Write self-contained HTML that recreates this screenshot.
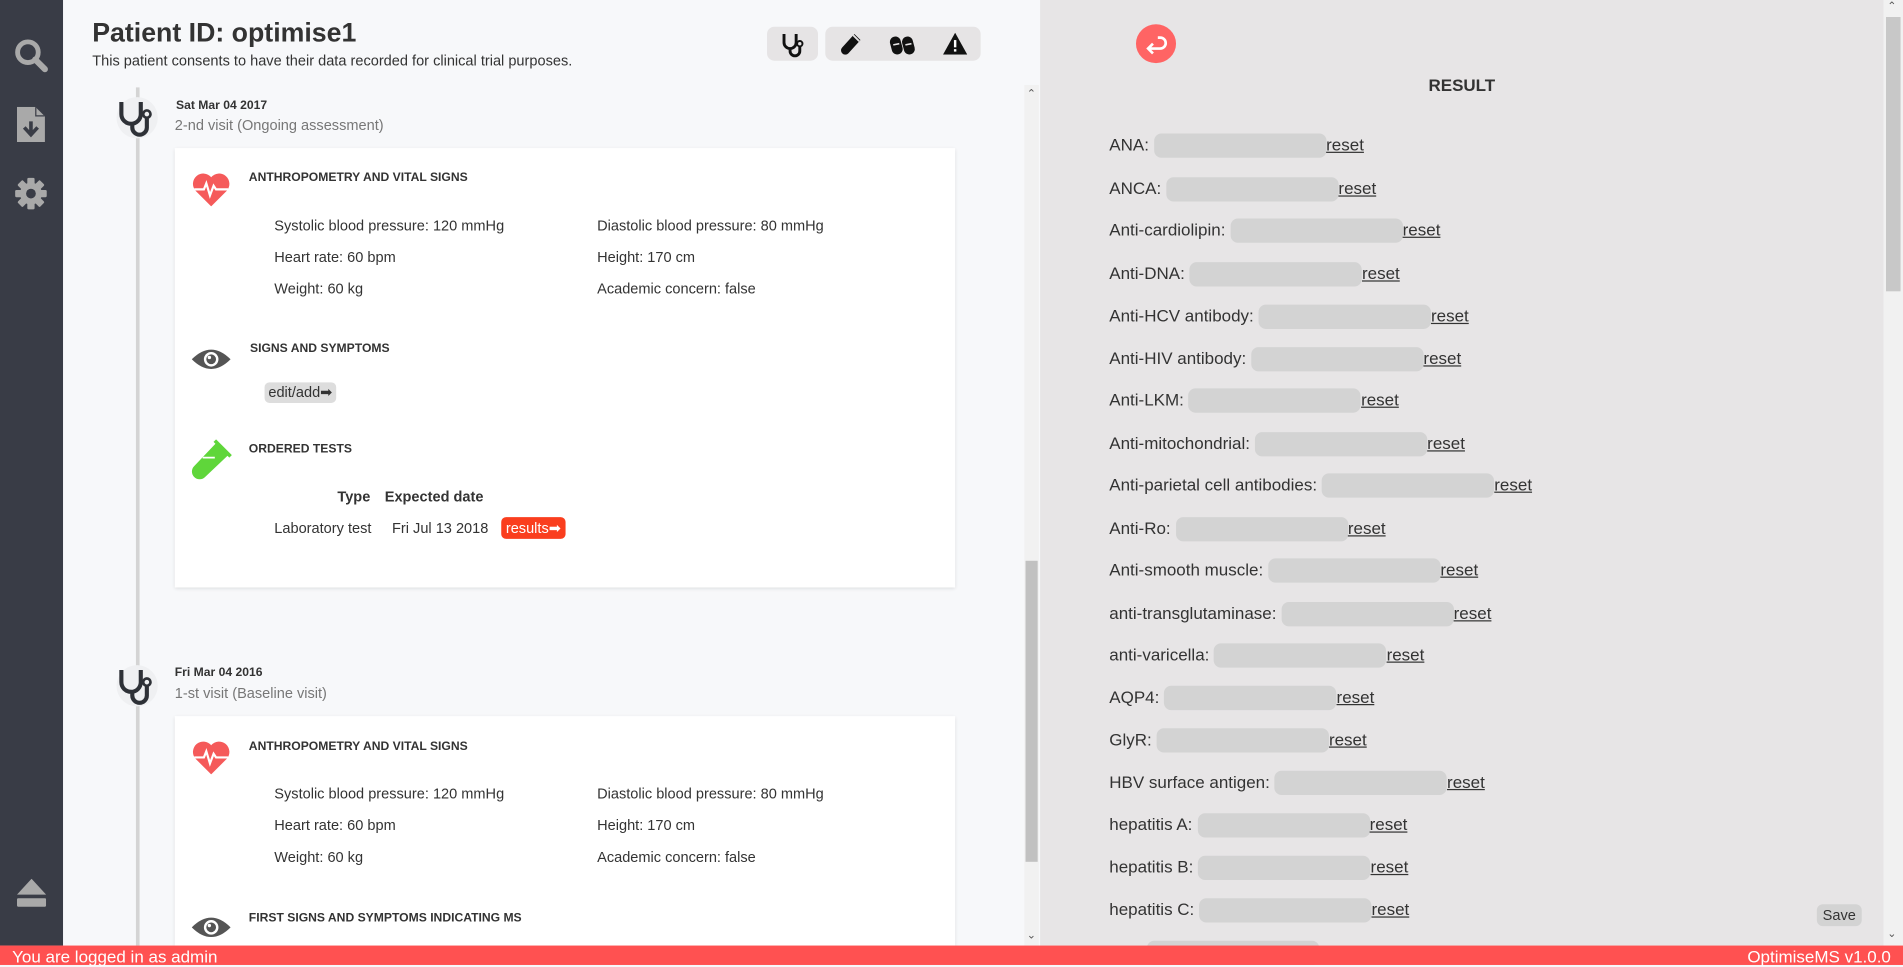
<!DOCTYPE html>
<html><head><meta charset="utf-8"><style>
html,body{margin:0;padding:0;width:1903px;height:965px;overflow:hidden;background:#f7f8fa;}
#w{position:absolute;left:0;top:0;width:1568px;height:795px;transform:scale(1.21365,1.2138);transform-origin:0 0;font-family:"Liberation Sans",Arial,sans-serif;color:#333;}
.abs{position:absolute;}
#side{left:0;top:0;width:52px;height:779px;background:#393c46;}
#left{left:52px;top:0;width:805px;height:779px;background:#f7f8fa;}
#right{left:857px;top:0;width:695px;height:779px;background:#e7e5e6;}
#bar{left:0;top:779px;width:1568px;height:16px;background:#ff5151;color:#fff;font-size:14px;line-height:18px;}
.card{background:#fff;box-shadow:0 1px 3px rgba(0,0,0,.12);}
.h{font-size:10px;font-weight:bold;color:#333;}
.t{font-size:12px;color:#333;}
.btn{background:#e6e4e5;border-radius:6px;}
.item{position:absolute;left:914px;font-size:14px;color:#333;height:20px;line-height:20px;white-space:nowrap;}
.item i{display:inline-block;width:142px;height:20px;background:#d3d3d3;border-radius:6px;vertical-align:middle;margin-left:4px;}
.item u{color:#333;}
</style></head><body><div id="w">
<div id="side" class="abs">
 <svg class="abs" style="left:10px;top:30px" width="32" height="32" viewBox="0 0 32 32"><circle cx="13" cy="13" r="8.5" fill="none" stroke="#a9a9a9" stroke-width="4"/><path d="M19 19 L27 27" stroke="#a9a9a9" stroke-width="5" stroke-linecap="round"/></svg>
 <svg class="abs" style="left:14px;top:88px" width="24" height="30" viewBox="0 0 24 30"><path d="M0 0 H15 L23 8 V29 H0 Z" fill="#a9a9a9"/><path d="M15 0 V8 H23" fill="#393c46"/><path d="M16 1 L22 7 H16Z" fill="#a9a9a9"/><path d="M11.5 12 V22 M6 17 L11.5 23 L17 17" stroke="#393c46" stroke-width="3" fill="none"/></svg>
 <svg class="abs" style="left:12px;top:146px" width="27" height="27" viewBox="-13.5 -13.5 27 27"><g fill="#a9a9a9"><circle r="9"/><g id="tt"><rect x="-3" y="-13" width="6" height="6" rx="1"/></g><use href="#tt" transform="rotate(45)"/><use href="#tt" transform="rotate(90)"/><use href="#tt" transform="rotate(135)"/><use href="#tt" transform="rotate(180)"/><use href="#tt" transform="rotate(225)"/><use href="#tt" transform="rotate(270)"/><use href="#tt" transform="rotate(315)"/></g><circle r="4" fill="#393c46"/></svg>
 <svg class="abs" style="left:14px;top:724px" width="24" height="28" viewBox="0 0 24 28"><path d="M12 0 L24 13 H0 Z" fill="#a9a9a9"/><rect x="0" y="16" width="24" height="7" rx="1" fill="#a9a9a9"/></svg>
</div>
<div id="left" class="abs"></div>
<div class="abs" style="left:76px;top:14px;font-size:22px;font-weight:bold;color:#333">Patient ID: optimise1</div>
<div class="abs t" style="left:76px;top:43px;font-size:12px">This patient consents to have their data recorded for clinical trial purposes.</div>
<div class="abs btn" style="left:632px;top:22px;width:42px;height:28px"></div>
<div class="abs btn" style="left:680px;top:22px;width:128px;height:28px"></div>
<svg class="abs" style="left:643px;top:26px" width="20" height="22" viewBox="0 0 20 22"><path d="M3 2 V9 A5 5 0 0 0 13 9 V2 M8 14 V16 A4 4 0 0 0 16 16 V12" fill="none" stroke="#111" stroke-width="2.4"/><circle cx="16" cy="10" r="2.2" fill="none" stroke="#111" stroke-width="1.6"/></svg>
<svg class="abs" style="left:692px;top:27px" width="18" height="20" viewBox="0 0 18 20"><path d="M12 1 L17 6 L7 17 A3.2 3.2 0 0 1 2 12 Z" fill="#111"/><path d="M11 2 L16 7" stroke="#e6e4e5" stroke-width="1.5"/></svg>
<svg class="abs" style="left:733px;top:28px" width="22" height="18" viewBox="0 0 22 18"><g fill="#111"><rect x="1" y="2" width="9" height="15" rx="4.5" transform="rotate(-15 5.5 9.5)"/><rect x="11" y="2" width="9" height="15" rx="4.5" transform="rotate(-15 15.5 9.5)"/></g><path d="M3 9 L8 8 M13 9 L18 8" stroke="#e6e4e5" stroke-width="1.3"/></svg>
<svg class="abs" style="left:777px;top:27px" width="20" height="18" viewBox="0 0 20 18"><path d="M10 0 L20 18 H0 Z" fill="#111"/><rect x="9" y="6" width="2" height="6" fill="#fff"/><rect x="9" y="13.5" width="2" height="2" fill="#fff"/></svg>
<!-- timeline -->
<div class="abs" style="left:112px;top:72px;width:3px;height:707px;background:#d4d4d4"></div>
<div class="abs" style="left:844px;top:70px;width:12px;height:709px;background:#f1f1f1"></div>
<div class="abs" style="left:845px;top:462px;width:10px;height:248px;background:#c1c1c1"></div>
<div class="abs" style="left:846px;top:72px;font-size:9px;color:#555">&#8963;</div>
<div class="abs" style="left:846px;top:765px;font-size:9px;color:#555">&#8964;</div>
<!-- visit 1 -->
<div class="abs" style="left:96px;top:80px;width:34px;height:34px;border-radius:50%;background:#eff0f2"></div>
<svg class="abs" style="left:97px;top:82px" width="30" height="32" viewBox="0 0 30 32"><path d="M3 2 V12 A8 8 0 0 0 19 12 V2 M12 20 V23 A6 6 0 0 0 24 23 V15" fill="none" stroke="#2e3137" stroke-width="3.4"/><circle cx="24" cy="12" r="3" fill="none" stroke="#2e3137" stroke-width="2.2"/></svg>
<div class="abs h" style="left:145px;top:82px">Sat Mar 04 2017</div>
<div class="abs t" style="left:144px;top:96px;color:#777">2-nd visit (Ongoing assessment)</div>
<div class="abs card" style="left:144px;top:122px;width:643px;height:362px"></div>
<svg class="abs" style="left:158px;top:142px" width="32" height="28" viewBox="0 0 32 28"><path d="M16 28 L3 15 A8 8 0 0 1 16 4 A8 8 0 0 1 29 15 Z" fill="#f55a5a"/><path d="M2 14 H10 L12 9 L15 19 L18 11 L20 14 H30" fill="none" stroke="#fff" stroke-width="1.8"/></svg>
<div class="abs h" style="left:205px;top:141px">ANTHROPOMETRY AND VITAL SIGNS</div>
<div class="abs t" style="left:226px;top:179px">Systolic blood pressure: 120 mmHg</div>
<div class="abs t" style="left:492px;top:179px">Diastolic blood pressure: 80 mmHg</div>
<div class="abs t" style="left:226px;top:205px">Heart rate: 60 bpm</div>
<div class="abs t" style="left:492px;top:205px">Height: 170 cm</div>
<div class="abs t" style="left:226px;top:231px">Weight: 60 kg</div>
<div class="abs t" style="left:492px;top:231px">Academic concern: false</div>
<svg class="abs" style="left:158px;top:286px" width="32" height="20" viewBox="0 0 32 20"><path d="M0 10 Q16 -6 32 10 Q16 26 0 10Z" fill="#555"/><circle cx="16" cy="10" r="6" fill="#fff"/><circle cx="16" cy="10" r="4" fill="#555"/><circle cx="14.5" cy="8.5" r="1.4" fill="#fff"/></svg>
<div class="abs h" style="left:206px;top:282px">SIGNS AND SYMPTOMS</div>
<div class="abs" style="left:218px;top:315px;width:59px;height:17px;background:#ddd;border-radius:4px;font-size:12px;line-height:17px;text-align:center">edit/add&#10145;</div>
<svg class="abs" style="left:157px;top:362px" width="34" height="34" viewBox="0 0 34 34"><path d="M22 2 L32 12 L12 31 A6 6 0 0 1 3 22 Z" fill="#5fd63a"/><path d="M20 1 L33 14" stroke="#5fd63a" stroke-width="3"/><path d="M10 15 L20 15" stroke="#fff" stroke-width="1.5"/></svg>
<div class="abs h" style="left:205px;top:365px">ORDERED TESTS</div>
<div class="abs t" style="left:278px;top:402px;font-weight:bold">Type</div>
<div class="abs t" style="left:317px;top:402px;font-weight:bold">Expected date</div>
<div class="abs t" style="left:226px;top:428px">Laboratory test</div>
<div class="abs t" style="left:323px;top:428px">Fri Jul 13 2018</div>
<div class="abs" style="left:413px;top:426px;width:53px;height:18px;background:#fa3e1e;border-radius:4px;color:#fff;font-size:12px;line-height:18px;text-align:center">results&#10145;</div>
<!-- visit 2 -->
<div class="abs" style="left:96px;top:548px;width:34px;height:34px;border-radius:50%;background:#eff0f2"></div>
<svg class="abs" style="left:97px;top:550px" width="30" height="32" viewBox="0 0 30 32"><path d="M3 2 V12 A8 8 0 0 0 19 12 V2 M12 20 V23 A6 6 0 0 0 24 23 V15" fill="none" stroke="#2e3137" stroke-width="3.4"/><circle cx="24" cy="12" r="3" fill="none" stroke="#2e3137" stroke-width="2.2"/></svg>
<div class="abs h" style="left:144px;top:549px">Fri Mar 04 2016</div>
<div class="abs t" style="left:144px;top:564px;color:#777">1-st visit (Baseline visit)</div>
<div class="abs card" style="left:144px;top:590px;width:643px;height:189px"></div>
<svg class="abs" style="left:158px;top:610px" width="32" height="28" viewBox="0 0 32 28"><path d="M16 28 L3 15 A8 8 0 0 1 16 4 A8 8 0 0 1 29 15 Z" fill="#f55a5a"/><path d="M2 14 H10 L12 9 L15 19 L18 11 L20 14 H30" fill="none" stroke="#fff" stroke-width="1.8"/></svg>
<div class="abs h" style="left:205px;top:610px">ANTHROPOMETRY AND VITAL SIGNS</div>
<div class="abs t" style="left:226px;top:647px">Systolic blood pressure: 120 mmHg</div>
<div class="abs t" style="left:492px;top:647px">Diastolic blood pressure: 80 mmHg</div>
<div class="abs t" style="left:226px;top:673px">Heart rate: 60 bpm</div>
<div class="abs t" style="left:492px;top:673px">Height: 170 cm</div>
<div class="abs t" style="left:226px;top:699px">Weight: 60 kg</div>
<div class="abs t" style="left:492px;top:699px">Academic concern: false</div>
<svg class="abs" style="left:158px;top:754px" width="32" height="20" viewBox="0 0 32 20"><path d="M0 10 Q16 -6 32 10 Q16 26 0 10Z" fill="#555"/><circle cx="16" cy="10" r="6" fill="#fff"/><circle cx="16" cy="10" r="4" fill="#555"/><circle cx="14.5" cy="8.5" r="1.4" fill="#fff"/></svg>
<div class="abs h" style="left:205px;top:751px">FIRST SIGNS AND SYMPTOMS INDICATING MS</div>
<!-- right -->
<div id="right" class="abs"></div>
<div class="abs" style="left:1552px;top:0;width:16px;height:779px;background:#f1f1f1"></div>
<div class="abs" style="left:1554px;top:14px;width:12px;height:226px;background:#c8c8c8"></div>
<div class="abs" style="left:1555px;top:0;font-size:9px;color:#555">&#8963;</div>
<div class="abs" style="left:1555px;top:764px;font-size:9px;color:#555">&#8964;</div>
<div class="abs" style="left:936px;top:20px;width:33px;height:32px;border-radius:50%;background:#ff6464"></div>
<svg class="abs" style="left:942px;top:27px" width="22" height="20" viewBox="0 0 22 20"><path d="M12 4 H14 A4.5 4.5 0 0 1 14 13 H4 M8 9 L4 13 L8 17" fill="none" stroke="#fff" stroke-width="2.2"/></svg>
<div class="abs" style="left:1177px;top:62px;font-size:14px;font-weight:bold;color:#333">RESULT</div>
<div class="item" style="top:109px">ANA:<i></i><u>reset</u></div>
<div class="item" style="top:145px">ANCA:<i></i><u>reset</u></div>
<div class="item" style="top:179px">Anti-cardiolipin:<i></i><u>reset</u></div>
<div class="item" style="top:215px">Anti-DNA:<i></i><u>reset</u></div>
<div class="item" style="top:250px">Anti-HCV antibody:<i></i><u>reset</u></div>
<div class="item" style="top:285px">Anti-HIV antibody:<i></i><u>reset</u></div>
<div class="item" style="top:319px">Anti-LKM:<i></i><u>reset</u></div>
<div class="item" style="top:355px">Anti-mitochondrial:<i></i><u>reset</u></div>
<div class="item" style="top:389px">Anti-parietal cell antibodies:<i></i><u>reset</u></div>
<div class="item" style="top:425px">Anti-Ro:<i></i><u>reset</u></div>
<div class="item" style="top:459px">Anti-smooth muscle:<i></i><u>reset</u></div>
<div class="item" style="top:495px">anti-transglutaminase:<i></i><u>reset</u></div>
<div class="item" style="top:529px">anti-varicella:<i></i><u>reset</u></div>
<div class="item" style="top:564px">AQP4:<i></i><u>reset</u></div>
<div class="item" style="top:599px">GlyR:<i></i><u>reset</u></div>
<div class="item" style="top:634px">HBV surface antigen:<i></i><u>reset</u></div>
<div class="item" style="top:669px">hepatitis A:<i></i><u>reset</u></div>
<div class="item" style="top:704px">hepatitis B:<i></i><u>reset</u></div>
<div class="item" style="top:739px">hepatitis C:<i></i><u>reset</u></div>
<div class="item" style="top:774px">HIV:<i></i><u>reset</u></div>
<div class="abs" style="left:1497px;top:745px;width:37px;height:18px;background:#d3d3d3;border-radius:5px;font-size:12px;line-height:18px;text-align:center;color:#333">Save</div>
<div id="bar" class="abs"><span style="position:absolute;left:10px;top:0">You are logged in as admin</span><span style="position:absolute;right:10px;top:0">OptimiseMS v1.0.0</span></div>
</div></body></html>
